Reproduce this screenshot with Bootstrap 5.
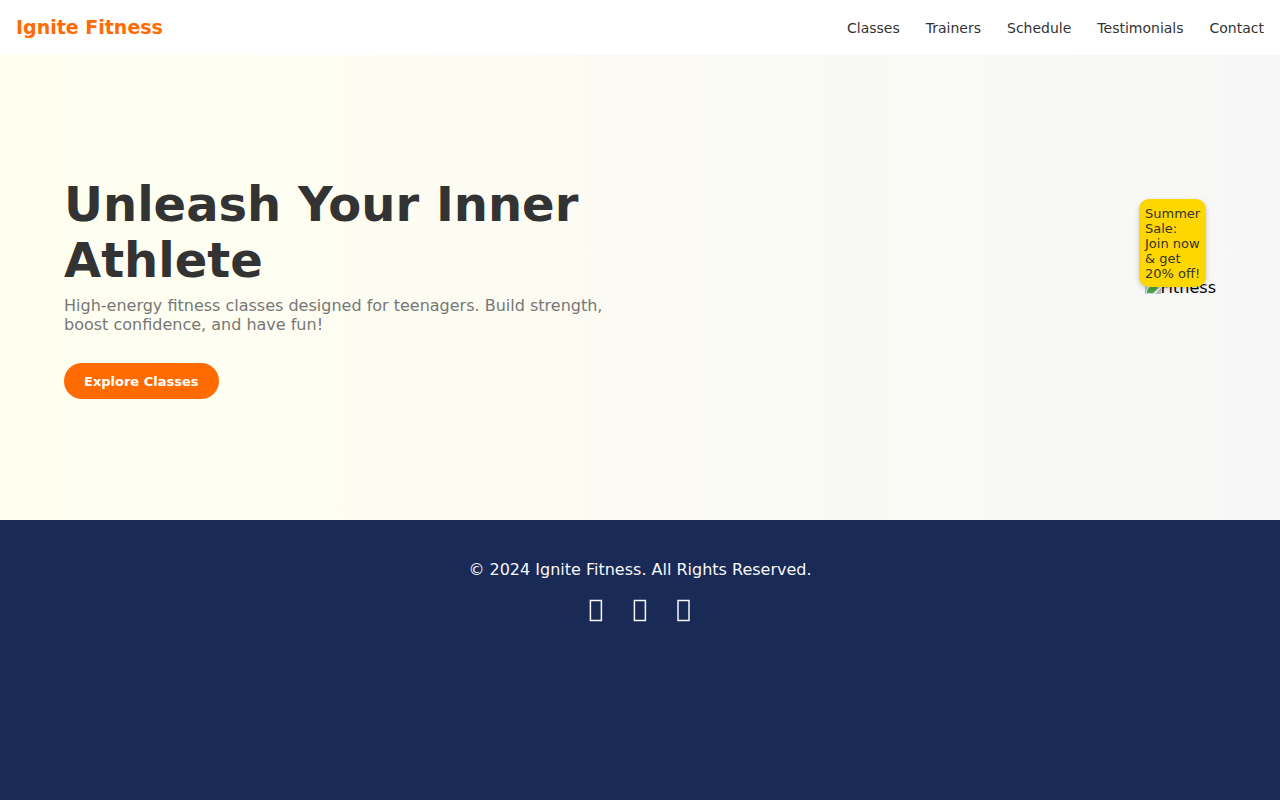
<!DOCTYPE html>
<html lang="en">
<head>
<meta charset="utf-8">
<meta name="viewport" content="width=device-width, initial-scale=1">
<title>Ignite Fitness</title>
<link rel="stylesheet" href="https://cdn.jsdelivr.net/npm/bootstrap@5.3.0/dist/css/bootstrap.min.css">
<style>
  body { font-family: "DejaVu Sans", sans-serif; font-size: 16px; line-height: 19px; color: #333; }
  .site-nav { padding: 16px; }
  .site-nav .navbar-brand { font-size: 19px; line-height: 23px; color: #ff6b00; }
  .site-nav .nav-link { font-size: 14px; line-height: 17px; color: #333; }
  .menu { column-gap: 26px; padding-top: 2px; }
  .hero { padding: 121px 64px; background: linear-gradient(90deg, #fffff0, #f7f7f7); }
  .hero h1 { font-size: 48px; line-height: 56px; }
  .hero-text { color: #777; margin-bottom: 29px; }
  .btn-explore { font-size: 13px; line-height: 16px; padding: 11px 20px 9px; color: #fff; background: #ff6b00; border: 0; }
  .btn-explore:hover { color: #fff; background: #e66000; }
  .photo { color: #000; margin-top: 102px; }
  .promo { width: 67px; right: 10px; bottom: 10px; padding: 7px 6px 6px; font-size: 13px; line-height: 15px;
    color: #333; background: #ffd700; border-radius: 10px; box-shadow: 0 2px 5px rgba(0,0,0,.2); }
  .promo span { white-space: nowrap; }
  .site-footer { padding: 40px 16px; color: #f7f7f7; background: #1a2a56; }
  .socials { column-gap: 30px; margin-top: 20px; }
  .socials a { color: #f7f7f7; }
</style>
</head>
<body class="d-flex flex-column min-vh-100">
<header>
  <nav class="navbar site-nav bg-white justify-content-between">
    <a class="navbar-brand fw-bold p-0 m-0" href="#">Ignite Fitness</a>
    <ul class="nav menu">
      <li><a class="nav-link p-0" href="#classes">Classes</a></li>
      <li><a class="nav-link p-0" href="#trainers">Trainers</a></li>
      <li><a class="nav-link p-0" href="#schedule">Schedule</a></li>
      <li><a class="nav-link p-0" href="#testimonials">Testimonials</a></li>
      <li><a class="nav-link p-0" href="#contact">Contact</a></li>
    </ul>
  </nav>
</header>
<main class="hero d-flex justify-content-between align-items-start">
  <div class="col-6">
    <h1 class="fw-bold mb-2">Unleash Your Inner Athlete</h1>
    <p class="hero-text">High-energy fitness classes designed for teenagers. Build strength, boost confidence, and have fun!</p>
    <button type="button" class="btn btn-explore rounded-pill fw-bold d-block">Explore Classes</button>
  </div>
  <div class="photo position-relative">
    <div class="d-flex">
      <svg width="16" height="16" viewBox="0 0 16 16" aria-hidden="true">
        <path d="M0 0h11l5 5v3l-8 8H0z" fill="#b5bcc8"/>
        <path d="M1 1h10l4 4v3l-8 8H1z" fill="#c4d7f5"/>
        <path d="M2 15c0-4 3-7 7-7 2 0 3 1 4 2l-5 5z" fill="#4caa3c"/>
        <path d="M10 16l6-6v6z" fill="#b5bcc8"/>
      </svg>
      <span>Fitness</span>
    </div>
    <div class="promo position-absolute"><span>Summer</span> Sale: <span>Join now</span> <span>&amp; get</span> <span>20% off!</span></div>
  </div>
</main>
<footer class="site-footer flex-grow-1 text-center">
  <p class="mb-0">© 2024 Ignite Fitness. All Rights Reserved.</p>
  <div class="socials d-flex justify-content-center">
    <a class="d-flex" href="#" aria-label="Facebook"><svg width="14" height="24" viewBox="0 0 14 24" fill="none" stroke="currentColor"><path d="M1.4 1.5h11v20h-11z" stroke-width="1.5"/></svg></a>
    <a class="d-flex" href="#" aria-label="Instagram"><svg width="14" height="24" viewBox="0 0 14 24" fill="none" stroke="currentColor"><path d="M1.4 1.5h11v20h-11z" stroke-width="1.5"/></svg></a>
    <a class="d-flex" href="#" aria-label="Twitter"><svg width="14" height="24" viewBox="0 0 14 24" fill="none" stroke="currentColor"><path d="M1 1.5h11v20h-11z" stroke-width="1.5"/></svg></a>
  </div>
</footer>
<script src="https://cdn.jsdelivr.net/npm/bootstrap@5.3.0/dist/js/bootstrap.bundle.min.js"></script>
</body>
</html>
